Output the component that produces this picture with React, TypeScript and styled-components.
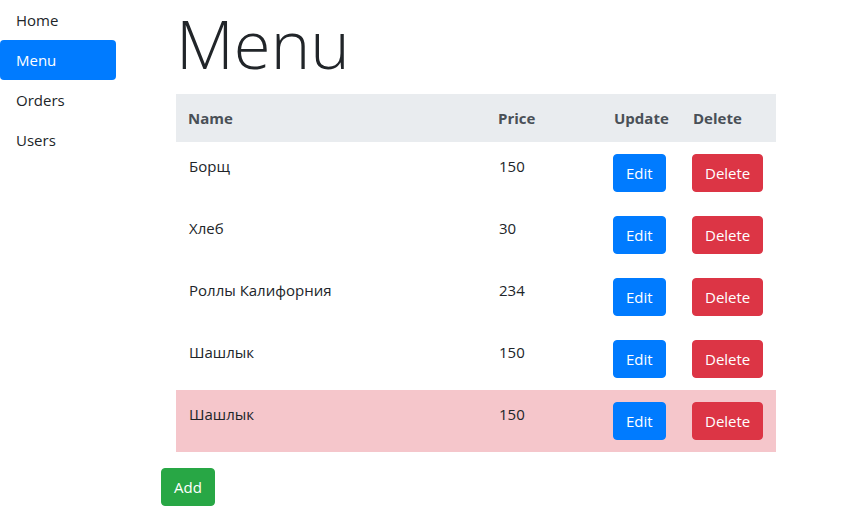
import styled, { createGlobalStyle } from "styled-components"

const GlobalStyle = createGlobalStyle`
    * {
        box-sizing: border-box;
    }

    body {
        margin: 0;
        font-family: "Open Sans", "Noto Sans", sans-serif;
        font-size: 15px;
        line-height: 24px;
        color: #212529;
        background: #fff;
    }
`

const Page = styled.div`
    display: flex;
    align-items: flex-start;
`

const Sidebar = styled.nav`
    width: 116px;
    display: flex;
    flex-direction: column;
`

const NavLink = styled.a<{ $active?: boolean }>`
    display: block;
    padding: 8px 16px;
    border-radius: 4px;
    text-decoration: none;
    color: ${p => (p.$active ? "#fff" : "#212529")};
    background-color: ${p => (p.$active ? "#007bff" : "transparent")};
`

const Main = styled.main`
    margin-left: 45px;
    width: 615px;
`

const Title = styled.h1`
    margin: 0 0 8px 15px;
    font-size: 67px;
    font-weight: 300;
    line-height: 86px;
`

const Table = styled.table`
    margin: 0 0 16px 15px;
    width: 600px;
    border-collapse: collapse;
    table-layout: fixed;
`

const HeadCell = styled.th<{ $w: number }>`
    width: ${p => p.$w}px;
    padding: 12px;
    text-align: left;
    vertical-align: bottom;
    font-weight: 700;
    color: #495057;
    background-color: #e9ecef;
`

const Row = styled.tr<{ $danger?: boolean }>`
    background-color: ${p => (p.$danger ? "#f5c6cb" : "transparent")};
`

const Cell = styled.td`
    padding: 12px 12px 12px 13px;
    vertical-align: top;
`

const Button = styled.button<{ $variant: "primary" | "danger" | "success" }>`
    display: inline-block;
    padding: 6px 12px;
    font-family: inherit;
    font-size: 15px;
    line-height: 24px;
    border-radius: 4px;
    color: #fff;
    border: 1px solid
        ${p => ({ primary: "#007bff", danger: "#dc3545", success: "#28a745" })[p.$variant]};
    background-color: ${p => ({ primary: "#007bff", danger: "#dc3545", success: "#28a745" })[p.$variant]};
    cursor: pointer;
`

const ActionCell = styled(Cell)`
    padding-left: 11px;
`

const items = [
    { name: "Борщ", price: 150 },
    { name: "Хлеб", price: 30 },
    { name: "Роллы Калифорния", price: 234 },
    { name: "Шашлык", price: 150 },
    { name: "Шашлык", price: 150, danger: true },
]

const App = () => {
    return (
        <>
            <GlobalStyle />
            <Page>
                <Sidebar>
                    <NavLink href="#">Home</NavLink>
                    <NavLink href="#" $active>Menu</NavLink>
                    <NavLink href="#">Orders</NavLink>
                    <NavLink href="#">Users</NavLink>
                </Sidebar>
                <Main>
                    <Title>Menu</Title>
                    <Table>
                        <thead>
                            <tr>
                                <HeadCell $w={310}>Name</HeadCell>
                                <HeadCell $w={116}>Price</HeadCell>
                                <HeadCell $w={79}>Update</HeadCell>
                                <HeadCell $w={95}>Delete</HeadCell>
                            </tr>
                        </thead>
                        <tbody>
                            {items.map((item, i) => (
                                <Row key={i} $danger={item.danger}>
                                    <Cell>{item.name}</Cell>
                                    <Cell>{item.price}</Cell>
                                    <ActionCell><Button $variant="primary">Edit</Button></ActionCell>
                                    <ActionCell><Button $variant="danger">Delete</Button></ActionCell>
                                </Row>
                            ))}
                        </tbody>
                    </Table>
                    <Button $variant="success">Add</Button>
                </Main>
            </Page>
        </>
    )
}

export default App
